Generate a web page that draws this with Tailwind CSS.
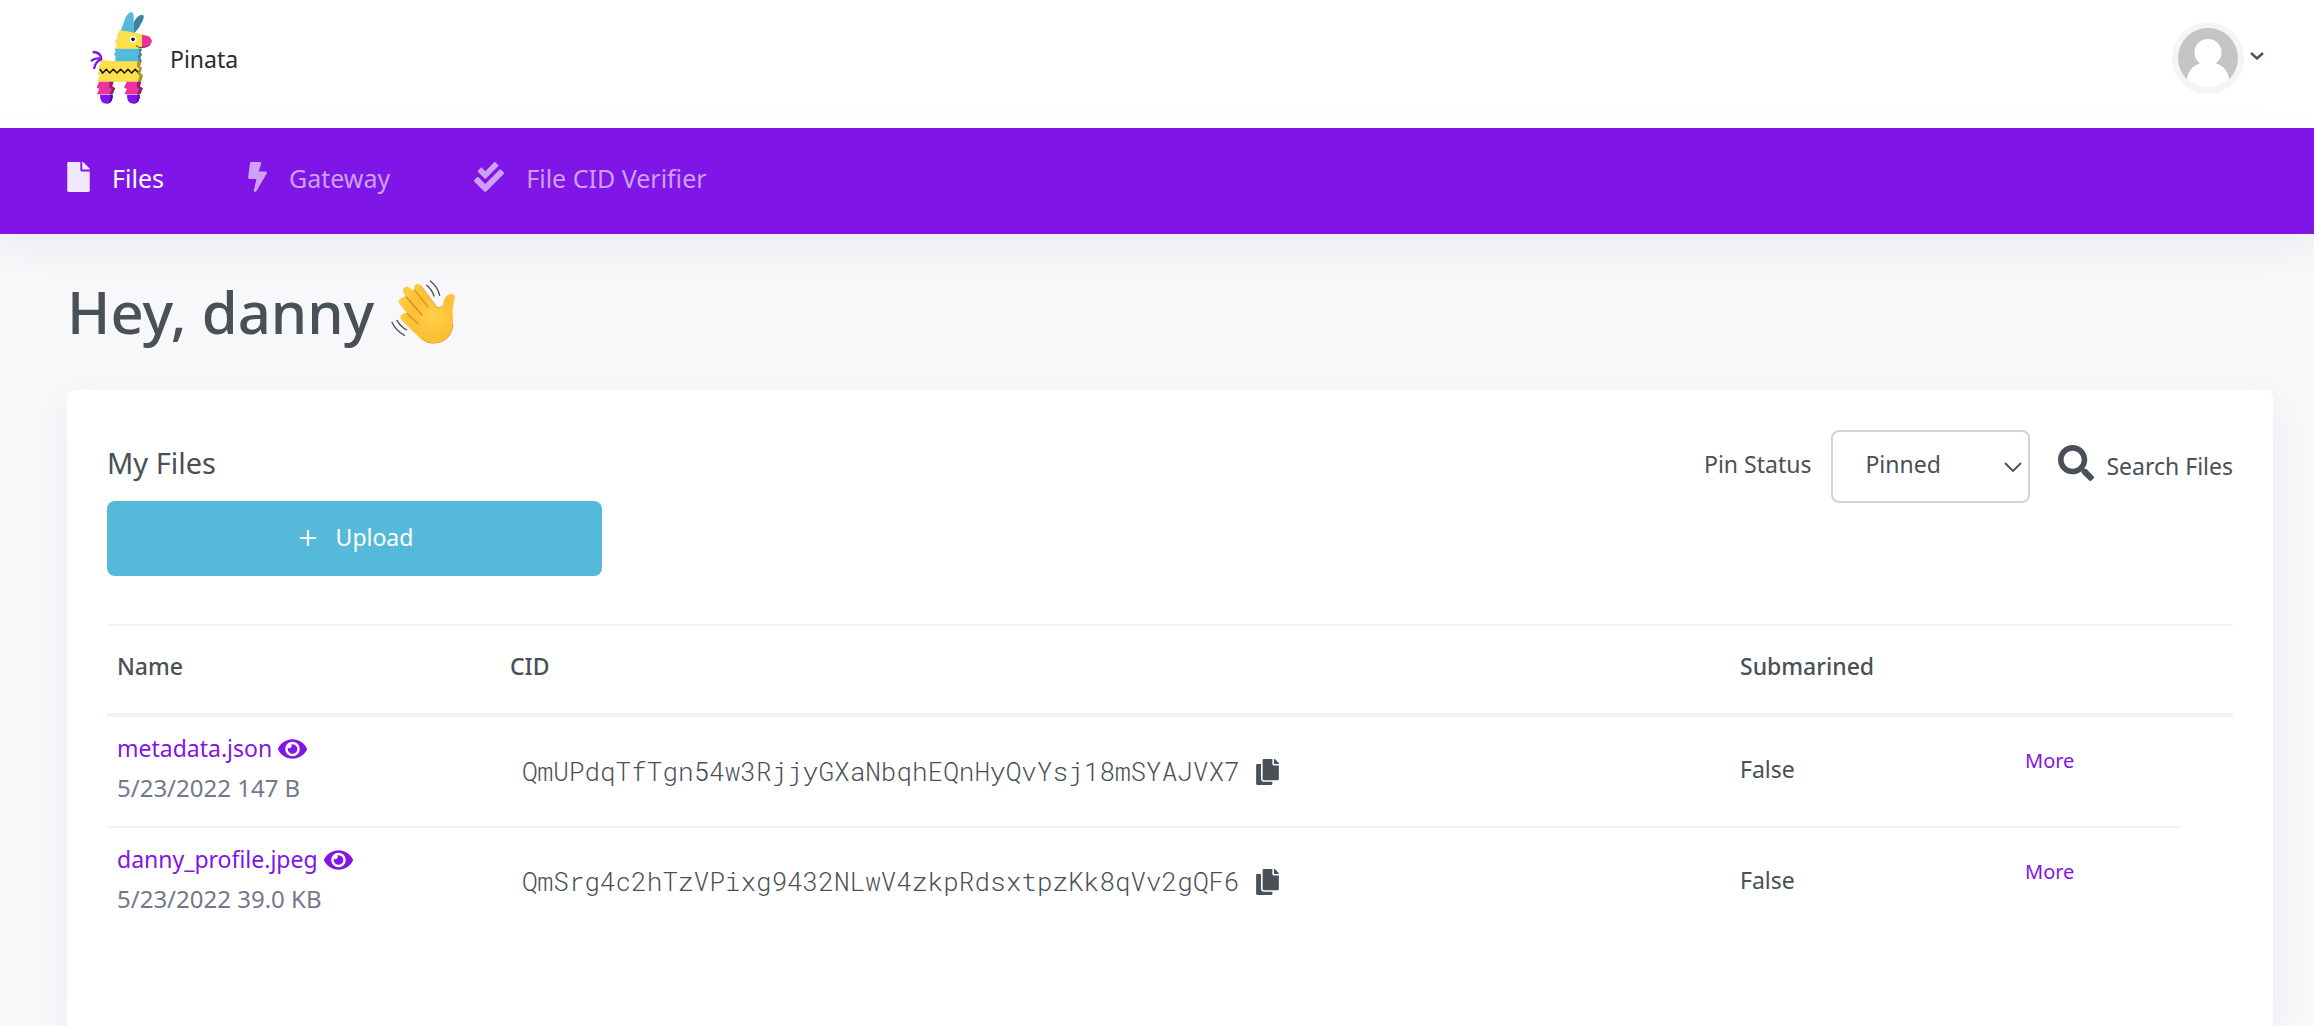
<!DOCTYPE html>
<html lang="en">
<head>
<meta charset="utf-8">
<meta name="viewport" content="width=device-width, initial-scale=1">
<title>Pinata - My Files</title>
<script src="https://cdn.jsdelivr.net/npm/@tailwindcss/browser@4"></script>
</head>
<body class="flex min-h-screen flex-col overflow-x-hidden bg-[#f8f8fb] font-['Noto_Sans',sans-serif] text-[23px] text-[#495057]">

<!-- Shared icon shapes -->
<svg class="hidden" aria-hidden="true">
  <symbol id="eye" viewBox="0 0 576 512"><path d="M572.52 241.4C518.29 135.59 410.93 64 288 64S57.68 135.64 3.48 241.41a32.35 32.35 0 0 0 0 29.19C57.71 376.41 165.07 448 288 448s230.32-71.64 284.52-177.41a32.35 32.35 0 0 0 0-29.19zM288 400a144 144 0 1 1 144-144 143.93 143.93 0 0 1-144 144zm0-240a95.31 95.31 0 0 0-25.31 3.79 47.85 47.85 0 0 1-66.9 66.9A95.78 95.78 0 1 0 288 160z"/></symbol>
  <symbol id="copy" viewBox="0 0 448 512"><path d="M320 448v40c0 13.255-10.745 24-24 24H24c-13.255 0-24-10.745-24-24V120c0-13.255 10.745-24 24-24h72v296c0 30.879 25.121 56 56 56h168zm0-344V0H152c-13.255 0-24 10.745-24 24v368c0 13.255 10.745 24 24 24h272c13.255 0 24-10.745 24-24V128H344c-13.2 0-24-10.8-24-24zm120.971-31.029L375.029 7.029A24 24 0 0 0 358.059 0H352v96h96v-6.059a24 24 0 0 0-7.029-16.97z"/></symbol>
</svg>

<header class="flex h-32 items-start justify-between bg-white pr-[50px] pl-[90px]">
  <a href="#" class="mt-[11px] flex items-center gap-[17px] text-[#2a2a2e]">
    <svg class="h-[94px] w-[63px]" viewBox="90 33 189 282" aria-hidden="true">
      <path d="M218 98L222 66Q232 44 248 44Q254 48 249 60Q240 82 224 99Z" fill="#3d8399"/>
      <path d="M182 92L197 52Q204 38 214 36Q221 38 221 50L222 99Z" fill="#55b9d9"/>
      <path d="M180 90L247 103V146H165L170 131L163 127L174 112L170 109Z" fill="#fbe04c"/>
      <path d="M246 104Q272 106 276 122Q275 140 246 144Z" fill="#ee319c"/>
      <path d="M246 139Q262 140 273 132Q266 143 246 144Z" fill="#b0256f"/>
      <circle cx="219" cy="118" r="10" fill="#fff"/><circle cx="219" cy="118" r="5.500" fill="#111"/>
      <path d="M228 137Q236 143 246 143" fill="none" stroke="#4b421c" stroke-width="3"/>
      <path d="M164 146H246L241 158L246 162L241 173L246 186H166V166H161L167 156Z" fill="#55b9d9"/>
      <path d="M236 146H246L241 158L246 162L241 173L246 186H238L233 170L238 160Z" fill="#3d8399"/>
      <path d="M125 180L165 184H243L238 200L245 205L240 221L247 226L244 245H111L119 227L112 222L120 208L115 204Z" fill="#fbe04c"/>
      <path d="M232 184H245L240 199L246 204L241 220L249 226L243 245H233L239 226L232 221L238 205L231 200Z" fill="#a8912f"/>
      <path d="M119 207L128 219L139 208L149 219L160 208L171 219L182 208L193 219L204 208L215 219L226 208L234 217" fill="none" stroke="#111" stroke-width="4.500"/>
      <path d="M117 245H155L152 262L161 266L155 283H111L118 267L110 263Z" fill="#ee319c"/>
      <path d="M149 245H161L157 259L166 265L158 283H148L155 267L147 261Z" fill="#94206a"/>
      <path d="M200 245H238L234 261L243 266L238 283H193L201 267L192 263Z" fill="#ee319c"/>
      <path d="M232 245H244L240 259L249 265L241 283H231L238 267L230 261Z" fill="#94206a"/>
      <path d="M120 284H158Q160 306 143 311Q119 312 120 284Z" fill="#8015e8"/>
      <path d="M150 284H158Q160 306 143 311Q154 300 150 284Z" fill="#4e0e96"/>
      <path d="M201 284H239Q241 306 224 311Q200 312 201 284Z" fill="#8015e8"/>
      <path d="M231 284H239Q241 306 224 311Q235 300 231 284Z" fill="#4e0e96"/>
      <path d="M124 180Q124 156 98 156M124 178Q110 170 93 183M124 178Q106 184 102 207" fill="none" stroke="#8015e8" stroke-width="7"/>
    </svg>
    <span class="pt-0.5">Pinata</span>
  </a>
  <button type="button" aria-label="Account menu" class="mt-[22px] flex items-center gap-1.5">
    <svg class="size-[72px]" viewBox="0 0 72 72" aria-hidden="true">
      <defs><clipPath id="face"><circle cx="36" cy="36" r="30"/></clipPath></defs>
      <circle cx="36" cy="36" r="36" fill="#f5f5f5"/>
      <g clip-path="url(#face)">
        <path fill="#c5c5c5" d="M0 0h72v72H0z"/>
        <path fill="#fff" d="M36 17c8 0 13.500 6 13.500 13.500 0 5-2.500 8-5.500 11C52 44 56 49 58 60v12H14V60c2-11 6-16 14-18.500-3-3-5.500-6-5.500-11C22.500 23 28 17 36 17z"/>
      </g>
    </svg>
    <svg class="mt-[-5px] h-2 w-[14px]" viewBox="0 0 14 8" fill="none" stroke="#495065" stroke-width="2.400" aria-hidden="true"><path d="M1 1l6 5.500L13 1"/></svg>
  </button>
</header>

<nav class="relative flex h-[106px] items-center gap-[84px] bg-[#8015e8] px-[67px] pb-2 text-[25px] text-white/60 shadow-[0_12px_40px_rgba(18,15,60,0.06)]">
  <a href="#" class="flex items-center gap-[22px] text-white">
    <svg class="h-[30px] w-[23px] opacity-90" viewBox="0 0 384 512" fill="currentColor" aria-hidden="true"><path d="M224 136V0H24C10.700 0 0 10.700 0 24v464c0 13.300 10.700 24 24 24h336c13.300 0 24-10.700 24-24V160H248c-13.200 0-24-10.800-24-24zm160-14.100v6.100H256V0h6.100c6.400 0 12.500 2.500 17 7l97.900 98c4.500 4.500 7 10.600 7 16.900z"/></svg>
    <span class="pt-[3px]">Files</span>
  </a>
  <a href="#" class="flex items-center gap-[22px]">
    <svg class="h-[30px] w-[19px]" viewBox="0 0 320 512" fill="currentColor" aria-hidden="true"><path d="M296 160H180.600l42.600-129.800C227.200 15 215.700 0 200 0H56C44 0 33.800 8.900 32.200 20.800l-32 240C-1.700 275.200 9.500 288 24 288h118.700L96.600 482.500c-3.600 15.200 8 29.500 23.300 29.500 8.400 0 16.400-4.400 20.800-12l176-304c9.300-15.900-2.200-36-20.700-36z"/></svg>
    <span class="pt-[3px]">Gateway</span>
  </a>
  <a href="#" class="flex items-center gap-[22px]">
    <svg class="size-[30px]" viewBox="0 0 512 512" fill="currentColor" aria-hidden="true"><path d="M505 174.800l-39.600-39.600c-9.400-9.400-24.600-9.400-33.900 0L192 374.700 80.600 263.200c-9.400-9.400-24.600-9.400-33.900 0L7 302.900c-9.400 9.400-9.400 24.600 0 34L175 505c9.400 9.400 24.600 9.400 33.900 0l296-296.200c9.400-9.500 9.400-24.700.1-34zm-324.300 106c6.200 6.300 16.400 6.300 22.600 0l208-208.200c6.200-6.300 6.200-16.400 0-22.600L366.100 4.700c-6.200-6.300-16.400-6.300-22.600 0L192 156.200l-55.400-55.500c-6.200-6.300-16.400-6.300-22.600 0L68.700 146c-6.200 6.300-6.200 16.400 0 22.600l112 112.200z"/></svg>
    <span class="pt-[3px]">File CID Verifier</span>
  </a>
</nav>

<main class="flex grow flex-col pt-10 pr-[41px] pl-[67px]">
  <h1 class="mb-10 flex items-center gap-4 text-[58px] leading-[76px] font-medium">Hey, danny
    <svg class="size-[66px]" viewBox="1014 60 198 198" role="img" aria-label="Waving hand">
      <defs><radialGradient id="skin" gradientUnits="userSpaceOnUse" cx="1145" cy="175" r="105"><stop offset="0" stop-color="#ffd04f"/><stop offset=".6" stop-color="#fdbf33"/><stop offset="1" stop-color="#ffc93f"/></radialGradient></defs>
      <path d="M1142 253Q1166 254 1186 237Q1205 218 1203 182Q1199 146 1209 114Q1209 103 1195 105Q1182 107 1175 126L1171 143L1156 146L1107 80Q1099 70 1090 77Q1083 84 1088 93L1080 94L1073 86Q1064 79 1056 87Q1050 94 1055 102L1062 113Q1048 114 1042 122Q1038 130 1046 139L1065 163Q1052 161 1046 170Q1043 178 1051 187L1107 240Q1122 252 1142 253Z" fill="url(#skin)"/>
      <path d="M1088 93L1128 144M1062 113L1110 168M1065 163L1098 194" fill="none" stroke="#dc8715" stroke-width="3.500" stroke-linecap="round"/>
      <path d="M1107 80L1156 146L1171 143M1110 240Q1124 253 1142 253Q1166 254 1186 237Q1201 222 1203 196" fill="none" stroke="#e39a22" stroke-width="3" stroke-linecap="round" opacity=".8"/>
      <path d="M1135 66Q1156 82 1163 109M1124 79Q1140 92 1146 111M1020 190Q1032 216 1057 229M1035 184Q1046 203 1064 213" fill="none" stroke="#4a4d52" stroke-width="4" stroke-linecap="round"/>
    </svg>
  </h1>

  <section class="grow rounded-t-lg bg-white p-10 shadow-[0_12px_40px_rgba(18,15,60,0.05)]">
    <div class="flex items-start justify-between">
      <div class="pt-[11px]">
        <h2 class="mb-4 text-[29px] leading-[44px]">My Files</h2>
        <button type="button" class="flex h-[75px] w-[495px] items-center justify-center gap-5 rounded-lg bg-[#55b9da] pb-0.5 pl-1 text-white">
          <svg class="size-4" viewBox="0 0 16 16" stroke="currentColor" stroke-width="2.200" aria-hidden="true"><path d="M8 0v16M0 8h16"/></svg>
          Upload
        </button>
      </div>
      <div class="flex items-center">
        <label for="pin-status" class="mr-5 pb-1">Pin Status</label>
        <div class="relative mr-7">
          <select id="pin-status" class="h-[73px] w-[199px] appearance-none rounded-lg border-2 border-[#ced4da] bg-white pb-1 pl-8">
            <option>Pinned</option>
            <option>Unpinned</option>
            <option>All</option>
          </select>
          <svg class="pointer-events-none absolute top-8 right-2 h-[10px] w-[18px]" viewBox="0 0 18 10" fill="none" stroke="#495057" stroke-width="1.800" aria-hidden="true"><path d="M1 1l8 8 8-8"/></svg>
        </div>
        <button type="button" class="flex items-center gap-3">
          <svg class="mb-2 size-9" viewBox="0 0 512 512" fill="currentColor" aria-hidden="true"><path d="M505 442.700L405.300 343c-4.500-4.500-10.600-7-17-7H372c27.600-35.300 44-79.700 44-128C416 93.100 322.900 0 208 0S0 93.100 0 208s93.100 208 208 208c48.300 0 92.700-16.400 128-44v16.300c0 6.400 2.500 12.500 7 17l99.700 99.700c9.400 9.400 24.600 9.400 33.900 0l28.300-28.300c9.400-9.400 9.400-24.600.1-34zM208 336c-70.700 0-128-57.200-128-128 0-70.700 57.200-128 128-128 70.700 0 128 57.200 128 128 0 70.700-57.200 128-128 128z"/></svg>
          Search Files
        </button>
      </div>
    </div>

    <table class="mt-12 w-full table-fixed border-separate border-spacing-0 text-left">
      <colgroup>
        <col class="w-[393px]"><col><col class="w-[295px]"><col class="w-[156px]"><col class="w-[52px]">
      </colgroup>
      <thead>
        <tr class="leading-9">
          <th scope="col" class="border-t-2 border-b-4 border-[#eff2f7] px-2.5 pt-[22px] pb-[29px] font-medium">Name</th>
          <th scope="col" class="border-t-2 border-b-4 border-[#eff2f7] px-2.5 pt-[22px] pb-[29px] font-medium">CID</th>
          <th scope="col" class="border-t-2 border-b-4 border-[#eff2f7] px-2.5 pt-[22px] pb-[29px] font-medium">Submarined</th>
          <td class="border-t-2 border-b-4 border-[#eff2f7]"></td>
          <td class="border-t-2 border-b-4 border-[#eff2f7]"></td>
        </tr>
      </thead>
      <tbody>
        <tr>
          <td class="border-b-2 border-[#eff2f7] px-2.5 pt-3 pb-[19px] leading-[39px]">
            <a href="#" class="flex items-center gap-1.5 text-[#8015e8]">metadata.json <svg class="h-[26px] w-[29px]" fill="currentColor" aria-hidden="true"><use href="#eye"/></svg></a>
            <div class="text-[24px] text-[#74788d]">5/23/2022 147 B</div>
          </td>
          <td class="border-b-2 border-[#eff2f7] pl-[22px]">
            <div class="flex items-center gap-4 font-['Roboto_Mono','Liberation_Mono',monospace] text-[26px] font-light">QmUPdqTfTgn54w3RjjyGXaNbqhEQnHyQvYsj18mSYAJVX7
              <button type="button" aria-label="Copy CID"><svg class="h-[26px] w-[23px]" fill="currentColor" aria-hidden="true"><use href="#copy"/></svg></button></div>
          </td>
          <td class="border-b-2 border-[#eff2f7] pb-1 pl-2.5">False</td>
          <td class="border-b-2 border-[#eff2f7] pt-[29px] align-top text-[20px] leading-[30px]"><a href="#" class="text-[#8015e8]">More</a></td>
          <td></td>
        </tr>
        <tr>
          <td class="px-2.5 pt-3 pb-[19px] leading-[39px]">
            <a href="#" class="flex items-center gap-1.5 text-[#8015e8]">danny_profile.jpeg <svg class="h-[26px] w-[29px]" fill="currentColor" aria-hidden="true"><use href="#eye"/></svg></a>
            <div class="text-[24px] text-[#74788d]">5/23/2022 39.0 KB</div>
          </td>
          <td class="pb-0.5 pl-[22px]">
            <div class="flex items-center gap-4 font-['Roboto_Mono','Liberation_Mono',monospace] text-[26px] font-light">QmSrg4c2hTzVPixg9432NLwV4zkpRdsxtpzKk8qVv2gQF6
              <button type="button" aria-label="Copy CID"><svg class="h-[26px] w-[23px]" fill="currentColor" aria-hidden="true"><use href="#copy"/></svg></button></div>
          </td>
          <td class="pb-1 pl-2.5">False</td>
          <td class="pt-[29px] align-top text-[20px] leading-[30px]"><a href="#" class="text-[#8015e8]">More</a></td>
          <td></td>
        </tr>
      </tbody>
    </table>
  </section>
</main>
</body>
</html>
